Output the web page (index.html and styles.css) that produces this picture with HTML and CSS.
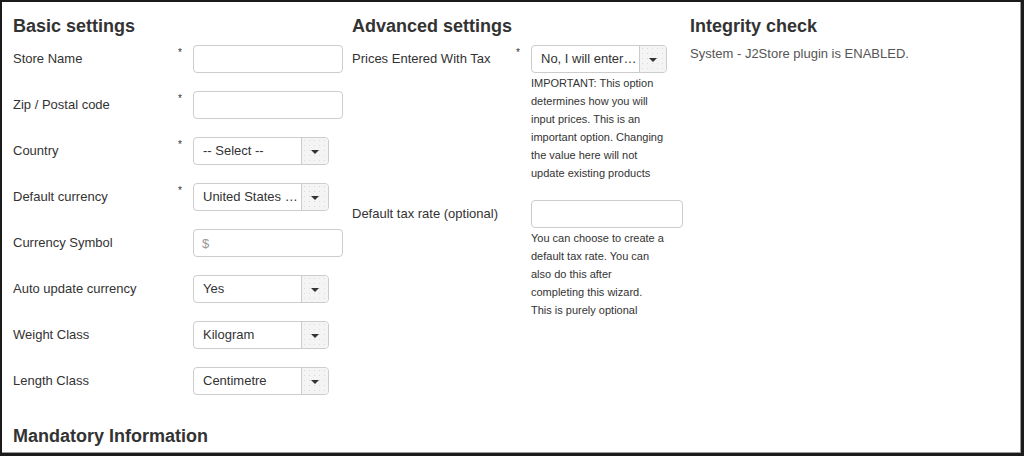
FILE: index.html
```html
<!DOCTYPE html>
<html lang="en">
<head>
<meta charset="utf-8">
<title>J2Store setup</title>
<link rel="stylesheet" href="styles.css">
</head>
<body>
<div class="frame">
  <div class="columns">
    <section class="col">
      <h3 class="heading">Basic settings</h3>
      <div class="row">
        <span class="lbl">Store Name</span><span class="req">*</span>
        <div class="ctl"><input class="text" type="text"></div>
      </div>
      <div class="row">
        <span class="lbl">Zip / Postal code</span><span class="req">*</span>
        <div class="ctl"><input class="text" type="text"></div>
      </div>
      <div class="row">
        <span class="lbl">Country</span><span class="req">*</span>
        <div class="ctl"><div class="select"><span class="val">-- Select --</span><span class="btn"><span class="caret"></span></span></div></div>
      </div>
      <div class="row">
        <span class="lbl">Default currency</span><span class="req">*</span>
        <div class="ctl"><div class="select"><span class="val">United States Dollar</span><span class="btn"><span class="caret"></span></span></div></div>
      </div>
      <div class="row">
        <span class="lbl">Currency Symbol</span><span class="req"></span>
        <div class="ctl"><input class="text" type="text" placeholder="$"></div>
      </div>
      <div class="row">
        <span class="lbl">Auto update currency</span><span class="req"></span>
        <div class="ctl"><div class="select"><span class="val">Yes</span><span class="btn"><span class="caret"></span></span></div></div>
      </div>
      <div class="row">
        <span class="lbl">Weight Class</span><span class="req"></span>
        <div class="ctl"><div class="select"><span class="val">Kilogram</span><span class="btn"><span class="caret"></span></span></div></div>
      </div>
      <div class="row">
        <span class="lbl">Length Class</span><span class="req"></span>
        <div class="ctl"><div class="select"><span class="val">Centimetre</span><span class="btn"><span class="caret"></span></span></div></div>
      </div>
    </section>
    <section class="col adv">
      <h3 class="heading">Advanced settings</h3>
      <div class="row">
        <span class="lbl">Prices Entered With Tax</span><span class="req">*</span>
        <div class="ctl">
          <div class="select"><span class="val">No, I will enter prices excluding tax</span><span class="btn"><span class="caret"></span></span></div>
          <p class="help">IMPORTANT: This option determines how you will input prices. This is an important option. Changing the value here will not update existing products</p>
        </div>
      </div>
      <div class="row">
        <span class="lbl">Default tax rate (optional)</span><span class="req"></span>
        <div class="ctl">
          <input class="text wide" type="text">
          <p class="help">You can choose to create a default tax rate. You can also do this after completing this wizard. This is purely optional</p>
        </div>
      </div>
    </section>
    <section class="col">
      <h3 class="heading">Integrity check</h3>
      <p class="status">System - J2Store plugin is ENABLED.</p>
    </section>
  </div>
  <h3 class="heading mandatory">Mandatory Information</h3>
</div>
</body>
</html>
```

FILE: styles.css
```css
* { box-sizing: border-box; }
html, body { margin: 0; padding: 0; background: #fff; }
body {
  font-family: "Liberation Sans", Arial, Helvetica, sans-serif;
  color: #333;
  font-size: 13px;
}
.frame {
  width: 1024px;
  height: 456px;
  overflow: hidden;
  border-style: solid;
  border-color: #1b1b1b;
  border-width: 2px 3px 3px 2px;
  box-shadow: inset -1px -1px 0 #9a9a9a;
  padding: 14px 0 0 11px;
}
.columns {
  display: grid;
  grid-template-columns: 339px 338px 1fr;
}
.heading {
  margin: 0;
  font-size: 18px;
  line-height: 20px;
  font-weight: bold;
  color: #333;
}
.row {
  display: flex;
  align-items: flex-start;
  margin-top: 9px;
  margin-bottom: 9px;
}
.row + .row { margin-top: 18px; }
.lbl {
  width: 165px;
  flex: none;
  line-height: 28px;
  font-size: 13px;
  color: #333;
}
.adv .lbl { width: 164px; }
.req {
  width: 15px;
  flex: none;
  font-size: 10px;
  line-height: 10px;
  margin-top: 3px;
  color: #333;
}
.ctl { display: flex; flex-direction: column; }
.text {
  width: 150px;
  height: 28px;
  margin: 0;
  border: 1px solid #ccc;
  border-radius: 4px;
  padding: 0 8px;
  font-family: inherit;
  font-size: 13px;
  color: #333;
  background: #fff;
}
.text.wide { width: 152px; }
.text::placeholder { color: #999; }
.select {
  width: 136px;
  height: 28px;
  display: flex;
  border: 1px solid #ccc;
  border-radius: 4px;
  background: #fff;
  overflow: hidden;
}
.val {
  flex: 1;
  min-width: 0;
  padding: 0 2px 0 9px;
  line-height: 26px;
  font-size: 13px;
  color: #333;
  white-space: nowrap;
  overflow: hidden;
  text-overflow: ellipsis;
}
.btn {
  width: 27px;
  flex: none;
  border-left: 1px solid #ccc;
  background-color: #f4f4f4;
  background-image: radial-gradient(circle, #dcdcdc 0.7px, transparent 0.9px);
  background-size: 5px 5px;
  display: flex;
  align-items: center;
  justify-content: center;
}
.caret {
  width: 0;
  height: 0;
  border-left: 4px solid transparent;
  border-right: 4px solid transparent;
  border-top: 4px solid #333;
  margin-top: 1px;
}
.help {
  width: 133px;
  margin: 1px 0 0 0;
  font-size: 11px;
  line-height: 18px;
  color: #333;
}
.status {
  margin: 9px 0 0 0;
  font-size: 13px;
  line-height: 18px;
  color: #555;
}
.mandatory { margin-top: 22px; }
```
